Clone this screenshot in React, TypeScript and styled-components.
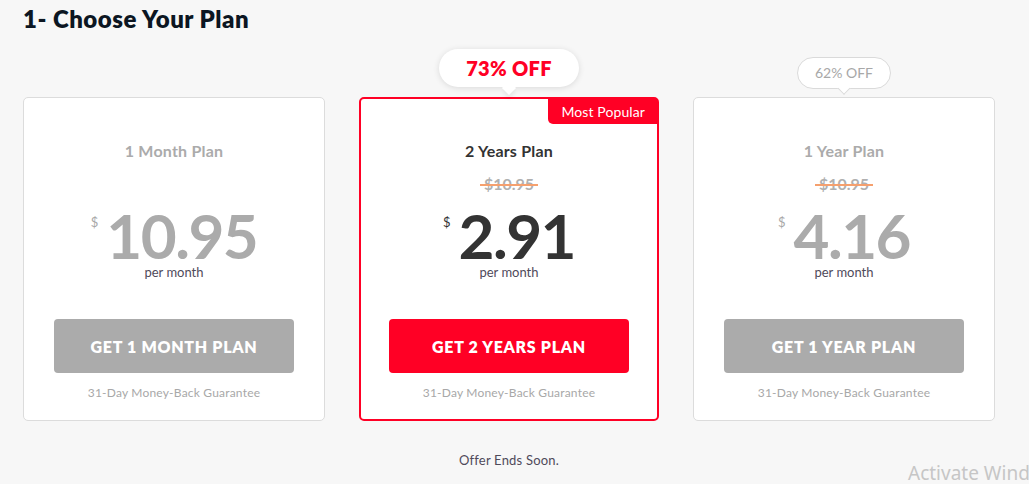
import React from "react";
import styled, { createGlobalStyle, css } from "styled-components";

const Global = createGlobalStyle`
  html, body { margin: 0; padding: 0; background: #f7f7f7; }
  body { font-family: Lato, "Noto Sans", sans-serif; -webkit-font-smoothing: antialiased; }
  * { box-sizing: border-box; }
`;

const RED = "#ff0025";

const Page = styled.div`
  position: relative;
  width: 1029px;
  height: 484px;
  padding: 0 0 0 23px;
  overflow: hidden;
`;

const Title = styled.h1`
  margin: 0;
  padding-top: 4px;
  font-size: 24px;
  line-height: 30px;
  font-weight: 800;
  color: #0c1622;
  letter-spacing: 0.5px;
`;

const Row = styled.div`
  display: flex;
  gap: 34px;
  margin-top: 63px;
  align-items: flex-start;
`;

const Card = styled.div<{ $popular?: boolean }>`
  position: relative;
  width: ${(p) => (p.$popular ? 300 : 302)}px;
  height: 324px;
  background: #fff;
  border-radius: 5px;
  border: ${(p) => (p.$popular ? `2px solid ${RED}` : "1px solid #dcdcdc")};
  display: flex;
  flex-direction: column;
  align-items: center;
  padding-top: ${(p) => (p.$popular ? 42 : 43)}px;
`;

const Badge = styled.div<{ $big?: boolean }>`
  position: absolute;
  left: 50%;
  transform: translateX(-50%);
  background: #fff;
  text-align: center;
  white-space: nowrap;
  ${(p) =>
    p.$big
      ? css`
          top: -50px;
          width: 140px;
          height: 38px;
          border-radius: 19px;
          color: ${RED};
          font-size: 20px;
          font-weight: 800;
          line-height: 38px;
          letter-spacing: 0.3px;
          box-shadow: 0 1px 6px rgba(0, 0, 0, 0.12);
        `
      : css`
          top: -41px;
          width: 94px;
          height: 32px;
          border-radius: 16px;
          border: 1px solid #dadada;
          color: #a8a8a8;
          font-size: 14px;
          font-weight: 400;
          line-height: 30px;
        `}
  &::after {
    content: "";
    position: absolute;
    left: 50%;
    bottom: -6px;
    width: 10px;
    height: 10px;
    background: #fff;
    transform: translateX(-50%) rotate(45deg);
    ${(p) =>
      p.$big
        ? css`
            box-shadow: 3px 3px 4px rgba(0, 0, 0, 0.06);
          `
        : css`
            border-right: 1px solid #dadada;
            border-bottom: 1px solid #dadada;
            bottom: -5px;
            width: 8px;
            height: 8px;
          `}
  }
`;

const Tag = styled.div`
  position: absolute;
  top: 0;
  right: 0;
  height: 25px;
  padding: 0 12px 0 13px;
  background: ${RED};
  color: #fff;
  font-size: 14px;
  line-height: 25px;
  letter-spacing: 0.1px;
  border-bottom-left-radius: 5px;
`;

const PlanName = styled.div<{ $active?: boolean }>`
  font-size: 16px;
  line-height: 20px;
  font-weight: 700;
  letter-spacing: 0.2px;
  color: ${(p) => (p.$active ? "#333" : "#ababab")};
`;

const Strike = styled.div<{ $hidden?: boolean }>`
  position: relative;
  margin-top: 13px;
  font-size: 16px;
  line-height: 20px;
  font-weight: 700;
  color: #b0b0b0;
  visibility: ${(p) => (p.$hidden ? "hidden" : "visible")};
  &::after {
    content: "";
    position: absolute;
    left: -4px;
    right: -4px;
    top: 10px;
    height: 2px;
    background: #f5a06e;
  }
`;

const PriceRow = styled.div`
  display: flex;
  align-items: flex-start;
  margin-top: 17px;
  height: 48px;
`;

const Currency = styled.span<{ $active?: boolean }>`
  font-size: 13px;
  line-height: 13px;
  margin-top: 5px;
  margin-right: 8px;
  color: ${(p) => (p.$active ? "#333" : "#a8a8a8")};
`;

const Amount = styled.span<{ $active?: boolean }>`
  font-size: 62px;
  line-height: 48px;
  font-weight: 700;
  letter-spacing: -1.5px;
  color: ${(p) => (p.$active ? "#333" : "#ababab")};
`;

const PerMonth = styled.div`
  margin-top: 5px;
  font-size: 13px;
  line-height: 16px;
  color: #4f4a5a;
`;

const Button = styled.button<{ $active?: boolean }>`
  margin-top: 39px;
  width: 240px;
  height: 54px;
  border: none;
  border-radius: 4px;
  background: ${(p) => (p.$active ? RED : "#ababab")};
  color: #fff;
  font-family: inherit;
  font-size: 16px;
  font-weight: 800;
  letter-spacing: 0.7px;
  cursor: pointer;
`;

const Guarantee = styled.div`
  margin-top: 12px;
  font-size: 12px;
  line-height: 16px;
  letter-spacing: 0.2px;
  color: #a8a8a8;
`;

const Footer = styled.div`
  width: 972px;
  margin-top: 31px;
  text-align: center;
  font-size: 13px;
  line-height: 16px;
  letter-spacing: 0.2px;
  color: #4f4a5a;
`;

const Watermark = styled.div`
  position: absolute;
  left: 908px;
  top: 460px;
  font-family: "Noto Sans", sans-serif;
  font-size: 19px;
  color: #c6c6c6;
  white-space: nowrap;
`;

type Plan = {
  name: string;
  price: string;
  cta: string;
  strike: boolean;
  popular?: boolean;
  badge?: { text: string; big?: boolean };
};

const plans: Plan[] = [
  { name: "1 Month Plan", price: "10.95", cta: "GET 1 MONTH PLAN", strike: false },
  {
    name: "2 Years Plan",
    price: "2.91",
    cta: "GET 2 YEARS PLAN",
    strike: true,
    popular: true,
    badge: { text: "73% OFF", big: true },
  },
  {
    name: "1 Year Plan",
    price: "4.16",
    cta: "GET 1 YEAR PLAN",
    strike: true,
    badge: { text: "62% OFF" },
  },
];

export default function App() {
  return (
    <Page>
      <Global />
      <Title>1- Choose Your Plan</Title>
      <Row>
        {plans.map((p) => (
          <Card key={p.name} $popular={p.popular}>
            {p.badge && <Badge $big={p.badge.big}>{p.badge.text}</Badge>}
            {p.popular && <Tag>Most Popular</Tag>}
            <PlanName $active={p.popular}>{p.name}</PlanName>
            <Strike $hidden={!p.strike}>$10.95</Strike>
            <PriceRow>
              <Currency $active={p.popular}>$</Currency>
              <Amount $active={p.popular}>{p.price}</Amount>
            </PriceRow>
            <PerMonth>per month</PerMonth>
            <Button $active={p.popular}>{p.cta}</Button>
            <Guarantee>31-Day Money-Back Guarantee</Guarantee>
          </Card>
        ))}
      </Row>
      <Footer>Offer Ends Soon.</Footer>
      <Watermark>Activate Wind</Watermark>
    </Page>
  );
}
